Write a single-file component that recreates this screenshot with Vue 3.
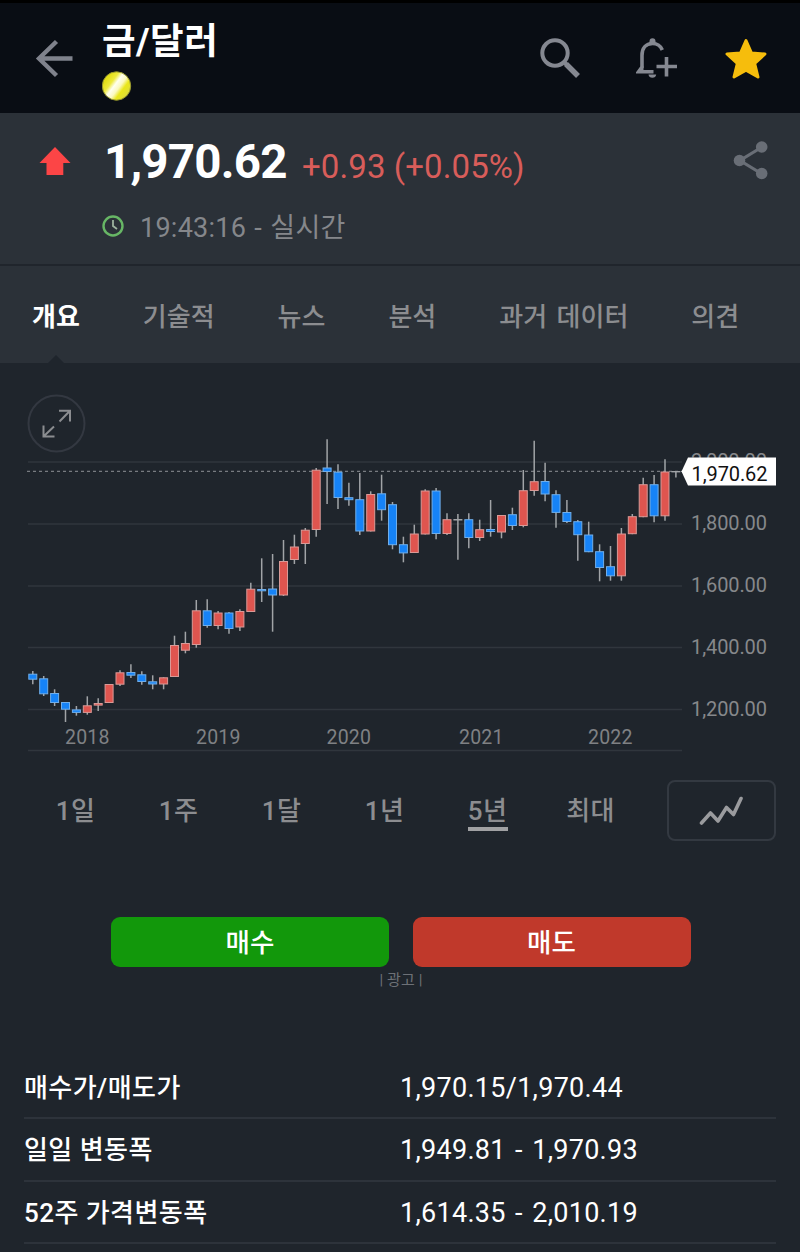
<template>
  <div class="app">
    <header class="top-bar">
      <button class="icon-btn back">
        <svg width="40" height="40" viewBox="0 0 40 40" fill="none" stroke="#7f828c" stroke-width="4.4">
          <path d="M38.5 20.5H5M22.500 3.500L5 20.500L22.500 37.500" />
        </svg>
      </button>
      <div class="title-box">
        <h1 class="title">금/달러</h1>
        <svg class="coin" width="30" height="30" viewBox="0 0 30 30">
          <defs>
            <linearGradient id="gold" x1="0.1" y1="0.2" x2="0.9" y2="0.8">
              <stop offset="0.08" stop-color="#e4df18" />
              <stop offset="0.28" stop-color="#eeea3d" />
              <stop offset="0.43" stop-color="#fffff0" />
              <stop offset="0.6" stop-color="#fbf9c0" />
              <stop offset="0.75" stop-color="#eae71c" />
              <stop offset="1" stop-color="#dddc3a" />
            </linearGradient>
          </defs>
          <circle cx="14.500" cy="15" r="14.2" fill="url(#gold)" stroke="#99982f" stroke-width="1" />
        </svg>
      </div>
      <div class="actions">
        <svg class="search" width="42" height="42" viewBox="0 0 42 42" fill="none" stroke="#858891">
          <circle cx="16" cy="16" r="12.700" stroke-width="4" />
          <path d="M25 25L28 28" stroke-width="4" />
          <path d="M27 27L39 39" stroke-width="5.500" />
        </svg>
        <svg class="bell" width="42" height="42" viewBox="0 0 42 42" fill="none" stroke="#858891" stroke-width="3.600">
          <path d="M17.500 34.800H2.500L6 30V18.500C6 11 10 6.500 16.500 6.500C21.500 6.500 24.500 8.700 26.300 13" />
          <path d="M2 35.200L7.500 29V35.200Z" fill="#858891" stroke="none" />
          <path d="M13.500 7V4.300A3 3 0 0 1 19.500 4.300V7Z" fill="#858891" stroke="none" />
          <path d="M12.500 37.500H20.200A3.900 3.900 0 0 1 12.500 37.500Z" fill="#858891" stroke="none" />
          <path d="M30.500 20V39.500M20.500 29.500H41" />
        </svg>
        <svg width="42" height="42" viewBox="0 0 42 42">
          <path
            d="M21 3.500L26.500 16L40 17L29.700 26.500L33 40L21 33.200L9 40L12.300 26.500L2 17L15.500 16Z"
            fill="#f6bd0c"
            stroke="#f6bd0c"
            stroke-width="3"
            stroke-linejoin="round"
          />
        </svg>
      </div>
    </header>

    <section class="quote">
      <svg class="up-arrow" width="32" height="30" viewBox="0 0 32 30">
        <path d="M16 1L31.500 17H24.300V29H7.500V17H0.500Z" fill="#fc4546" />
      </svg>
      <div class="quote-main">
        <div class="price-row">
          <span class="price">1,970.62</span>
          <span class="change">+0.93 (+0.05%)</span>
        </div>
        <div class="time-row">
          <svg width="22" height="22" viewBox="0 0 22 22" fill="none">
            <circle cx="11" cy="11" r="9.500" stroke="#67b665" stroke-width="2.400" />
            <path d="M11 5V11L15 14" stroke="#9db29f" stroke-width="1.800" />
          </svg>
          <span class="time">19:43:16 - 실시간</span>
        </div>
      </div>
      <svg class="share" width="36" height="40" viewBox="0 0 36 40" fill="#696e76">
        <path d="M29 7L7 20.500L29 34" fill="none" stroke="#696e76" stroke-width="3.200" />
        <circle cx="28.700" cy="7" r="5.800" />
        <circle cx="6.500" cy="20.500" r="5.800" />
        <circle cx="28.700" cy="33.500" r="5.800" />
      </svg>
    </section>

    <nav class="tabs">
      <a v-for="tab in tabs" :key="tab" class="tab" :class="{ active: tab === activeTab }">{{ tab }}</a>
    </nav>

    <section class="chart-box">
      <svg class="chart" width="800" height="400" viewBox="0 363 800 400">
        <!-- Grid lines and price labels -->
        <g v-for="level in levels" :key="level.label">
          <line x1="28" x2="682" :y1="level.y" :y2="level.y" class="grid-line" />
          <text x="691" :y="level.y + 6.300" class="axis-label" textLength="76">{{ level.label }}</text>
        </g>
        <line x1="28" x2="682" y1="750.500" y2="750.500" class="grid-line" />
        <text v-for="year in years" :key="year.label" :x="year.x" y="744" class="year-label" textLength="44.500">
          {{ year.label }}
        </text>
        <line x1="27" x2="682" y1="471.300" y2="471.300" class="price-line" />

        <!-- Candles -->
        <g v-for="(candle, index) in candles" :key="index" :class="candle.kind">
          <line :x1="candle.x" :x2="candle.x" :y1="candle.high" :y2="candle.low" class="wick" />
          <rect
            :x="candle.x - 4"
            :y="candle.top + 0.5"
            width="8"
            :height="Math.max(candle.bottom - candle.top - 1, 0.4)"
            class="candle-body"
          />
        </g>

        <!-- Current price tag -->
        <path d="M681.500 471.500L688 457.500H776V485.500H688Z" fill="#fff" />
        <text x="691.500" y="480.500" class="tag-label" textLength="76">1,970.62</text>

        <!-- Expand button -->
        <circle cx="56.500" cy="423.500" r="28" fill="none" stroke="#333841" stroke-width="2" />
        <path
          d="M59 410.800H70V421.500M70 410.800L59.500 421.500M43.500 425.500V436.500H54.500M43.500 436.500L54 426.500"
          class="expand-icon"
        />
      </svg>
    </section>

    <section class="ranges">
      <button
        v-for="range in ranges"
        :key="range"
        class="range"
        :class="{ selected: range === activeRange }"
      >
        {{ range }}
      </button>
      <button class="chart-type">
        <svg width="46" height="32" viewBox="0 0 46 32" fill="none" stroke="#9a9b9e">
          <path
            d="M2.500 28L11.500 18L19 26L27.500 12.500L34.500 19.500L42 3.500"
            stroke-width="3.600"
            stroke-linecap="round"
            stroke-linejoin="round"
          />
        </svg>
      </button>
    </section>

    <section class="trade">
      <div class="trade-buttons">
        <button class="trade-btn buy">매수</button>
        <button class="trade-btn sell">매도</button>
      </div>
      <div class="ad-note">| 광고 |</div>
    </section>

    <section class="stats">
      <div v-for="row in stats" :key="row.label" class="stat-row">
        <span class="stat-label">{{ row.label }}</span>
        <span class="stat-value">{{ row.value }}</span>
      </div>
    </section>
  </div>
</template>

<script setup>
import { computed, ref } from 'vue'

const tabs = ['개요', '기술적', '뉴스', '분석', '과거 데이터', '의견']
const activeTab = ref('개요')

const ranges = ['1일', '1주', '1달', '1년', '5년', '최대']
const activeRange = ref('5년')

const levels = [
  { label: '2,000.00', y: 462 },
  { label: '1,800.00', y: 524 },
  { label: '1,600.00', y: 586 },
  { label: '1,400.00', y: 647.5 },
  { label: '1,200.00', y: 709.5 },
]

const years = [
  { label: '2018', x: 65 },
  { label: '2019', x: 196 },
  { label: '2020', x: 326.5 },
  { label: '2021', x: 459 },
  { label: '2022', x: 588 },
]

const stats = [
  { label: '매수가/매도가', value: '1,970.15/1,970.44' },
  { label: '일일 변동폭', value: '1,949.81 - 1,970.93' },
  { label: '52주 가격변동폭', value: '1,614.35 - 2,010.19' },
]

// Monthly candles: [kind, high, body top, body bottom, low]
const series = [
  ['down', 671, 673.7, 679.7, 684.3],
  ['down', 676, 678.3, 694.3, 696],
  ['down', 689.3, 693, 703, 706],
  ['down', 702, 702, 709.7, 722],
  ['down', 706, 709.4, 712.9, 715.7],
  ['up', 696.3, 705.3, 712.9, 714.7],
  ['up', 698.3, 703, 705.6, 711],
  ['up', 684, 684, 703, 703],
  ['up', 670.3, 672.3, 684.7, 686],
  ['down', 664.3, 672, 675.7, 678],
  ['down', 671.3, 674.3, 682, 684.7],
  ['down', 675.3, 681.3, 684.5, 689.3],
  ['up', 677.3, 677.3, 684.5, 689.3],
  ['up', 635.7, 645, 677, 677],
  ['up', 631.7, 643, 650.7, 653.3],
  ['up', 600, 610.3, 645, 647.7],
  ['down', 599.3, 610.3, 626, 627.7],
  ['up', 611, 612.5, 626, 629.3],
  ['down', 612, 612.5, 629, 633.7],
  ['up', 609.3, 611, 627.5, 631],
  ['up', 582.7, 588.7, 612, 612],
  ['down', 558.3, 589, 591.3, 602],
  ['down', 554, 588.5, 595.5, 631.7],
  ['up', 540, 561, 595.5, 596],
  ['up', 534.7, 546.5, 560, 564],
  ['up', 528, 529.7, 544, 564],
  ['up', 468, 469.7, 530, 536.7],
  ['down', 439.3, 467.5, 472, 504],
  ['down', 464.3, 471.7, 498, 509],
  ['down', 482.7, 497.2, 500.2, 505.7],
  ['down', 473, 499.2, 531.5, 535],
  ['up', 491.3, 494, 531.5, 531.5],
  ['down', 474.7, 493.3, 510.2, 520.7],
  ['down', 502, 504.2, 545.2, 549.3],
  ['down', 536.7, 544.2, 553.4, 562.3],
  ['up', 524.7, 533.5, 553, 553],
  ['up', 489.3, 490.5, 534.5, 534.5],
  ['down', 488, 490.5, 534, 539.3],
  ['up', 513.3, 519.2, 534, 535],
  ['flat', 514, 519, 520.5, 559.7],
  ['down', 513.3, 519.2, 538, 548.3],
  ['up', 519.7, 529.2, 538, 541],
  ['down', 500, 529, 532, 536.7],
  ['up', 515, 515, 532.5, 538.3],
  ['down', 507.7, 514.2, 526, 530],
  ['up', 470, 490.2, 526, 527.3],
  ['up', 440.7, 481.2, 491, 495.7],
  ['down', 462.7, 481, 494.5, 501.3],
  ['down', 490.3, 494.2, 512.9, 527.7],
  ['down', 500, 512, 522, 523],
  ['down', 520, 521.2, 535.2, 560.7],
  ['down', 521.7, 534.5, 552.2, 552.2],
  ['down', 544.3, 551.2, 568, 581.3],
  ['down', 546, 566.2, 576.3, 580.7],
  ['up', 528, 533.5, 576.3, 580.7],
  ['up', 514, 516.2, 534.2, 534.2],
  ['up', 477.7, 484.2, 517.2, 517.2],
  ['down', 475, 484.2, 516.3, 522.3],
  ['up', 459.3, 471.5, 516.3, 520.7],
  ['flat', 471, 471, 472, 477.5],
]

const candles = computed(() =>
  series.map(([kind, high, top, bottom, low], index) => ({
    kind,
    high,
    top,
    bottom,
    low,
    x: 32.8 + index * 10.9,
  })),
)
</script>

<style>
body {
  margin: 0;
  background: #1f252c;
}
</style>

<style scoped>
.app {
  width: 800px;
  height: 1252px;
  overflow: hidden;
  background: #1f252c;
  color: #fff;
  font-family: Roboto, 'Noto Sans CJK KR', sans-serif;
}

button {
  padding: 0;
  border: none;
  background: none;
  color: inherit;
  font-family: inherit;
}

svg {
  display: block;
  flex-shrink: 0;
}

/* Top bar */
.top-bar {
  display: flex;
  box-sizing: border-box;
  height: 113px;
  border-top: 3px solid #000;
  background: #090d14;
}

.back {
  width: 102px;
  padding: 35px 0 0 34px;
  box-sizing: border-box;
  display: flex;
  align-items: flex-start;
}

.title-box {
  flex: 1;
  padding-top: 13px;
}

.title {
  margin: 0;
  height: 50px;
  line-height: 52px;
  font-size: 36.5px;
  font-weight: 700;
  letter-spacing: 0.5px;
}

.coin {
  margin-top: 5px;
}

.actions {
  display: flex;
  padding: 34px 33px 0 0;
}

.search {
  margin-right: 55.5px;
}

.bell {
  margin-right: 47px;
}

/* Quote */
.quote {
  display: flex;
  box-sizing: border-box;
  height: 153px;
  border-bottom: 2px solid #20252c;
  background: #2b3138;
}

.up-arrow {
  margin: 33px 33px 0 39px;
}

.quote-main {
  flex: 1;
}

.price-row {
  display: flex;
  align-items: baseline;
  height: 60px;
  padding-top: 19px;
  line-height: 60px;
}

.price {
  width: 198px;
  font-size: 47.5px;
  font-weight: 700;
  letter-spacing: -0.8px;
}

.change {
  color: #d85d5a;
  font-size: 33px;
  letter-spacing: 0.1px;
}

.time-row {
  display: flex;
  align-items: center;
  gap: 16px;
  height: 40px;
  margin-top: 14px;
  margin-left: -2px;
  color: #85878b;
  font-size: 27px;
  line-height: 40px;
}

.time {
  padding-top: 3px;
  letter-spacing: 0.25px;
  word-spacing: 1.3px;
}

.share {
  margin: 27px 31px 0 0;
}

/* Tabs */
.tabs {
  display: flex;
  gap: 63px;
  height: 97px;
  padding-left: 32px;
  background: #2b3138;
  color: #8c8d90;
  font-size: 26px;
  font-weight: 500;
  line-height: 102px;
  white-space: nowrap;
  word-spacing: 3px;
}

.tab {
  position: relative;
}

.active {
  color: #fff;
  font-weight: 700;
}

.active::after {
  content: '';
  position: absolute;
  left: 50%;
  bottom: 0;
  margin-left: -8px;
  border: 8px solid transparent;
  border-top: none;
  border-bottom-color: #1f252c;
}

/* Chart */
.chart-box {
  height: 400px;
}

.grid-line {
  stroke: #30363d;
  stroke-width: 1.3;
}

.price-line {
  stroke: #777b80;
  stroke-width: 1.3;
  stroke-dasharray: 3 3;
}

.axis-label {
  fill: #86888b;
  font-size: 20px;
}

.year-label {
  fill: #7f8184;
  font-size: 19.5px;
}

.tag-label {
  fill: #111;
  font-size: 20px;
}

.wick {
  stroke: #a1a4a7;
  stroke-width: 1.5;
}

.candle-body {
  stroke-width: 1;
}

.up .candle-body {
  fill: #df554f;
  stroke: #d99a97;
}

.down .candle-body {
  fill: #1683f7;
  stroke: #71aee9;
}

.flat .candle-body {
  fill: #a1a4a7;
  stroke: #a1a4a7;
}

.expand-icon {
  fill: none;
  stroke: #8b8d90;
  stroke-width: 2;
}

/* Ranges */
.ranges {
  display: flex;
  padding: 17px 24px 0;
}

.range {
  position: relative;
  width: 103px;
  height: 60px;
  color: #8c8d90;
  font-size: 26px;
  font-weight: 500;
  line-height: 62px;
  letter-spacing: 0.3px;
}

.selected::after {
  content: '';
  position: absolute;
  left: 32px;
  bottom: 9px;
  width: 40px;
  height: 4px;
  background: #a0a1a3;
}

.chart-type {
  display: flex;
  align-items: center;
  justify-content: center;
  box-sizing: border-box;
  width: 109px;
  height: 61px;
  margin-left: auto;
  border: 2px solid #333941;
  border-radius: 8px;
}

/* Trade */
.trade {
  padding-top: 76px;
}

.trade-buttons {
  display: flex;
  gap: 23.5px;
  padding-left: 111px;
}

.trade-btn {
  width: 278px;
  height: 50px;
  border-radius: 9px;
  font-size: 26.5px;
  font-weight: 500;
  line-height: 52px;
}

.buy {
  background: #12980b;
}

.sell {
  background: #c0392b;
}

.ad-note {
  color: #6d7177;
  font-size: 15px;
  line-height: 26px;
  text-align: center;
  letter-spacing: 0.1px;
  padding-left: 2px;
}

/* Stats */
.stats {
  margin: 64px 24px 0;
}

.stat-row {
  display: flex;
  box-sizing: border-box;
  height: 62.4px;
  border-bottom: 2px solid #2d333b;
  line-height: 63px;
}

.stat-label {
  width: 376px;
  font-size: 26px;
  font-weight: 500;
  letter-spacing: 0.45px;
}

.stat-value {
  font-size: 27px;
  letter-spacing: 0.28px;
  word-spacing: 2.4px;
}
</style>
